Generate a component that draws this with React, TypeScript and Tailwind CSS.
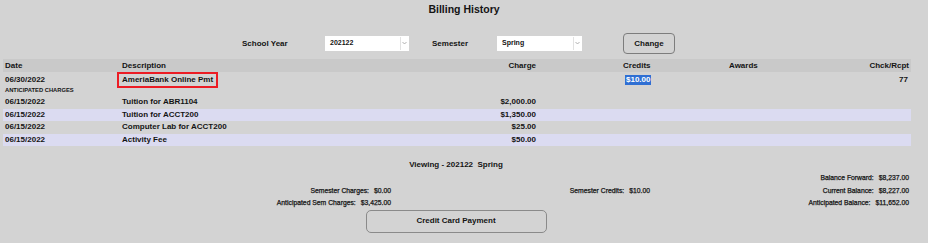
import React from "react";

const Chevron = () => (
  <svg width="5" height="4" viewBox="0 0 5 4" className="absolute right-[2px] top-[5px]">
    <path d="M0.5 1 L2.5 3 L4.5 1" fill="none" stroke="#a0a0a0" strokeWidth="0.8" />
  </svg>
);

const Select = ({ value, w }: { value: string; w: string }) => (
  <div className={`relative ${w} h-[15px] bg-white flex items-center pl-[5px] text-[7px] font-bold`}>
    {value}
    <div className="absolute right-[8px] top-[1px] bottom-[1px] w-px bg-[#e2e2e2]" />
    <Chevron />
  </div>
);

type Row = { date: string; desc: string; charge: string; alt: boolean };

const rows: Row[] = [
  { date: "06/15/2022", desc: "Tuition for ABR1104", charge: "$2,000.00", alt: false },
  { date: "06/15/2022", desc: "Tuition for ACCT200", charge: "$1,350.00", alt: true },
  { date: "06/15/2022", desc: "Computer Lab for ACCT200", charge: "$25.00", alt: false },
  { date: "06/15/2022", desc: "Activity Fee", charge: "$50.00", alt: true },
];

const grid = "grid grid-cols-[118px_320px_97px_189px_100px_84px] items-center";

const Pair = ({ label, value }: { label: string; value: string }) => (
  <div className="flex justify-end gap-[5px]">
    <span>{label}</span>
    <span>{value}</span>
  </div>
);

export default function App() {
  return (
    <div className="w-[928px] h-[243px] overflow-hidden bg-[#d3d3d3] text-[#141414] font-['Liberation_Sans',Arial,sans-serif]">
      <div className="h-[18px] pt-[2px] text-center text-[10.5px] font-bold leading-[14px]">
        Billing History
      </div>
      <div className="ml-[242px] mt-[15px] h-[21px] flex items-center text-[8px] font-bold">
        <div className="w-[83px]">School Year</div>
        <Select value="202122" w="w-[84px]" />
        <div className="ml-[23px] w-[65px]">Semester</div>
        <Select value="Spring" w="w-[85px]" />
        <div className="ml-[41px] w-[52px] h-[21px] rounded-[4px] border-[1.5px] border-[#7d7d7d] flex items-center justify-center">
          Change
        </div>
      </div>
      <div className="ml-[3px] mt-[5px] w-[908px] text-[8px] font-bold">
        <div className={`${grid} h-[13px] bg-[#c9c9c9]`}>
          <div className="pl-[2px]">Date</div>
          <div className="pl-[1px]">Description</div>
          <div className="text-right pr-[2px]">Charge</div>
          <div className="pl-[85px]">Credits</div>
          <div className="pl-[2px]">Awards</div>
          <div className="text-right pr-[2px]">Chck/Rcpt</div>
        </div>
        <div className={`${grid} h-[13px]`}>
          <div className="pl-[2px]">06/30/2022</div>
          <div className="pl-[1px] flex items-center">
            <span className="inline-block -ml-[5px] h-[15.5px] border-2 border-[#ec1c24] px-[3px] leading-[11.5px]">
              AmeriaBank Online Pmt
            </span>
          </div>
          <div />
          <div className="pl-[87px]">
            <span className="bg-[#2f6fd3] text-white px-[1px] leading-[10px] inline-block">$10.00</span>
          </div>
          <div />
          <div className="text-right pr-[3px]">77</div>
        </div>
        <div className="h-[11px] pl-[2px] text-[5.8px] font-bold leading-[11px]">ANTICIPATED CHARGES</div>
        {rows.map((r, i) => (
          <div key={i} className={`${grid} h-[12.5px] ${r.alt ? "bg-[#dbdbf1]" : ""}`}>
            <div className="pl-[2px]">{r.date}</div>
            <div className="pl-[1px]">{r.desc}</div>
            <div className="text-right pr-[2px]">{r.charge}</div>
            <div />
            <div />
            <div />
          </div>
        ))}
      </div>
      <div className="w-[912px] mt-[13px] h-[12px] text-center text-[8px] font-bold leading-[12px]">
        Viewing - 202122&nbsp;&nbsp;Spring
      </div>
      <div className="ml-[132px] mt-[1px] w-[777px] grid grid-cols-3 text-[6.8px] leading-[12.5px] text-right [-webkit-text-stroke:0.25px_#141414]">
        <div />
        <div />
        <Pair label="Balance Forward:" value="$8,237.00" />
        <Pair label="Semester Charges:" value="$0.00" />
        <Pair label="Semester Credits:" value="$10.00" />
        <Pair label="Current Balance:" value="$8,227.00" />
        <Pair label="Anticipated Sem Charges:" value="$3,425.00" />
        <div />
        <Pair label="Anticipated Balance:" value="$11,652.00" />
      </div>
      <div className="w-[912px] flex justify-center">
        <div className="w-[181px] h-[23px] rounded-[5px] border-[1.5px] border-[#8a8a8a] flex items-center justify-center text-[8px] font-bold">
          Credit Card Payment
        </div>
      </div>
    </div>
  );
}
